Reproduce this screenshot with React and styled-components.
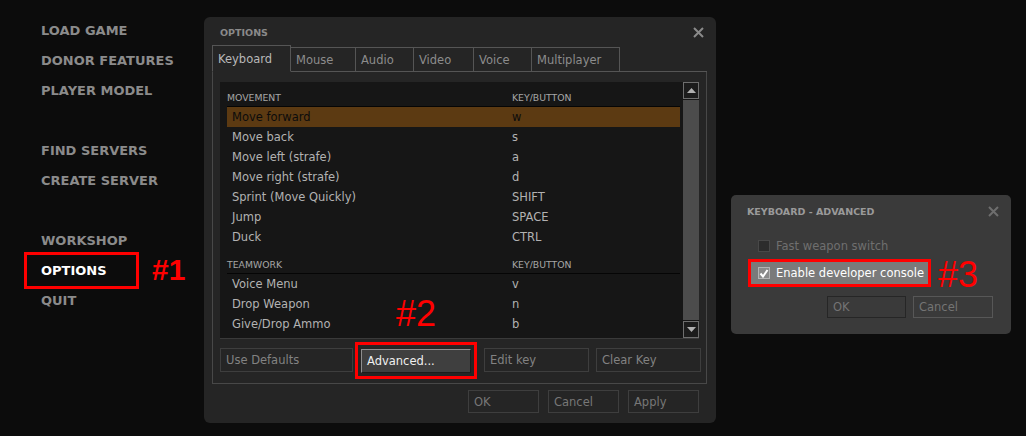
import React from 'react';
import styled, { createGlobalStyle } from 'styled-components';

const GlobalStyle = createGlobalStyle`
  html, body {
    margin: 0;
    padding: 0;
    background: #0c0c0c;
  }
  body {
    font-family: "DejaVu Sans", Verdana, sans-serif;
  }
`

const Page = styled.div`
  width: 1026px;
  height: 436px;
  display: flex;
  align-items: flex-start;
  overflow: hidden;
  background: #0c0c0c;
`

const Menu = styled.div`
  width: 204px;
  box-sizing: border-box;
  padding: 16px 0 0 41px;
  display: flex;
  flex-direction: column;
`

const MenuItem = styled.div`
  position: relative;
  height: 30px;
  line-height: 30px;
  font-weight: bold;
  font-size: 13px;
  white-space: nowrap;
  color: ${p => (p.$active ? '#ffffff' : '#8b8b8b')};
`

const MenuGap = styled.div`
  height: 30px;
`

const MenuMarker = styled.span`
  position: absolute;
  left: -17px;
  top: -4px;
  width: 115px;
  height: 37px;
  box-sizing: border-box;
  border: 3px solid #ff0000;
`

const Tag = styled.span`
  position: absolute;
  left: ${p => p.$left}px;
  top: ${p => p.$top}px;
  font-family: "Liberation Sans", Arial, sans-serif;
  font-size: ${p => p.$size}px;
  line-height: ${p => p.$size}px;
  color: #ff0000;
  white-space: nowrap;
`

const Dialog = styled.div`
  width: 512px;
  height: 406px;
  margin-top: 17px;
  box-sizing: border-box;
  padding: 0 9px 0 8px;
  background: #252525;
  border-radius: 6px;
  display: flex;
  flex-direction: column;
`

const TitleBar = styled.div`
  height: 28px;
  box-sizing: border-box;
  padding: 2px 3px 0 8px;
  display: flex;
  align-items: center;
  justify-content: space-between;
`

const Title = styled.span`
  font-weight: bold;
  font-size: 9.5px;
  color: #8a8a8a;
`

const TabRow = styled.div`
  height: 26px;
  display: flex;
  align-items: flex-end;
  border-bottom: 1px solid #555555;
`

const Tab = styled.div`
  width: ${p => p.$w}px;
  height: ${p => (p.$active ? 27 : 25)}px;
  margin-bottom: -1px;
  box-sizing: border-box;
  padding: 1px 0 0 5px;
  display: flex;
  align-items: center;
  border: 1px solid #555555;
  border-bottom-color: ${p => (p.$active ? '#252525' : '#555555')};
  border-left-width: ${p => (p.$first ? 1 : 0)}px;
  font-size: 11.5px;
  color: ${p => (p.$active ? '#b8b8b8' : '#8c8c8c')};
`

const Panel = styled.div`
  height: 312px;
  box-sizing: border-box;
  padding: 10px 7px 0 7px;
  border: 1px solid #484848;
  border-top: none;
  display: flex;
  flex-direction: column;
`

const List = styled.div`
  height: 257px;
  display: flex;
  background: #161616;
  border-bottom: 1px solid #3a3a3a;
  box-sizing: border-box;
`

const ListBody = styled.div`
  flex: 1;
  padding: 0 3px 0 7px;
`

const SectionHeader = styled.div`
  height: ${p => p.$h}px;
  box-sizing: border-box;
  display: grid;
  grid-template-columns: 285px 1fr;
  align-items: end;
  padding-bottom: 2px;
  line-height: 12px;
  border-bottom: 1px solid #050505;
  font-size: 9.3px;
  color: #a6a6a6;
`

const Row = styled.div`
  height: 20px;
  display: grid;
  grid-template-columns: 280px 1fr;
  align-items: center;
  padding-left: 5px;
  font-size: 11.5px;
  background: ${p => (p.$selected ? '#5c3a12' : 'transparent')};
  color: ${p => (p.$selected ? '#0c0c0c' : '#b2b2b2')};
`

const Scrollbar = styled.div`
  width: 16px;
  display: flex;
  flex-direction: column;
  background: #161616;
`

const ScrollButton = styled.div`
  height: 17px;
  box-sizing: border-box;
  border: 1px solid #6e6e6e;
  background: #1c1c1c;
  display: flex;
  align-items: center;
  justify-content: center;
`

const Thumb = styled.div`
  flex: 1;
  margin: 1px 0;
  background: #4c4c4c;
`

const ButtonRow = styled.div`
  height: 24px;
  margin: 9px -2px 0 0;
  display: flex;
  align-items: center;
`

const Button = styled.div`
  width: ${p => p.$w}px;
  height: ${p => p.$h || 24}px;
  margin-left: ${p => p.$ml || 0}px;
  box-sizing: border-box;
  padding-left: 5px;
  display: flex;
  align-items: center;
  font-size: 11.5px;
  white-space: nowrap;
  border: 1px solid ${p => p.$border || '#3e3e3e'};
  color: ${p => p.$color || '#828282'};
`

const RaisedButton = styled(Button)`
  background: #3f3f3f;
  border-color: #8e8e8e #1c1c1c #1c1c1c #8e8e8e;
  color: #f0f0f0;
`

const Highlight = styled.div`
  position: relative;
  margin-left: ${p => p.$ml || 0}px;
  padding: 4px 3px 3px 3px;
  border: 3px solid #ff0000;
  flex-shrink: 0;
`

const Footer = styled.div`
  height: 23px;
  margin-top: 6px;
  padding-right: 8px;
  display: flex;
  justify-content: flex-end;
  gap: 9px;
`

const Advanced = styled.div`
  width: 280px;
  height: 139px;
  margin: 195px 0 0 15px;
  box-sizing: border-box;
  background: #3a3a3a;
  border-radius: 5px;
  display: flex;
  flex-direction: column;
`

const AdvTitleBar = styled.div`
  height: 32px;
  padding: 0 12px 0 16px;
  display: flex;
  align-items: center;
  justify-content: space-between;
`

const AdvTitle = styled.span`
  font-weight: bold;
  font-size: 9.5px;
  color: #9a9a9a;
`

const CheckList = styled.div`
  padding: 9px 0 0 17px;
  display: flex;
  flex-direction: column;
  gap: 3px;
`

const CheckRow = styled.div`
  height: 20px;
  padding-left: 10px;
  display: flex;
  align-items: center;
  gap: 6px;
  font-size: 11.5px;
  color: #6f6f6f;
`

const CheckHighlight = styled.div`
  position: relative;
  width: 183px;
  height: 28px;
  box-sizing: border-box;
  border: 3px solid #ff0000;
  background: #7a7a7a;
  padding-left: 7px;
  display: flex;
  align-items: center;
  gap: 6px;
  font-size: 11.5px;
  color: #ffffff;
`

const Box = styled.span`
  width: 12px;
  height: 12px;
  box-sizing: border-box;
  flex-shrink: 0;
  display: flex;
  align-items: center;
  justify-content: center;
  border: 1px solid ${p => (p.$checked ? '#b4b4b4' : '#484848')};
  background: ${p => (p.$checked ? '#8a8a8a' : '#2c2c2c')};
`

const AdvButtons = styled.div`
  margin-top: 9px;
  padding-right: 18px;
  display: flex;
  justify-content: flex-end;
  gap: 7px;
`

const Close = ({ color }) => (
  <svg width="11" height="11" viewBox="0 0 11 11">
    <path d="M1 1 L10 10 M10 1 L1 10" stroke={color} strokeWidth="2" />
  </svg>
)

const Arrow = ({ down }) => (
  <svg width="9" height="5" viewBox="0 0 9 5">
    <polygon points={down ? '0,0 9,0 4.5,5' : '0,5 9,5 4.5,0'} fill="#b0b0b0" />
  </svg>
)

const movement = [
  ['Move forward', 'w'],
  ['Move back', 's'],
  ['Move left (strafe)', 'a'],
  ['Move right (strafe)', 'd'],
  ['Sprint (Move Quickly)', 'SHIFT'],
  ['Jump', 'SPACE'],
  ['Duck', 'CTRL'],
]

const teamwork = [
  ['Voice Menu', 'v'],
  ['Drop Weapon', 'n'],
  ['Give/Drop Ammo', 'b'],
]

const tabs = [
  ['Keyboard', 79],
  ['Mouse', 65],
  ['Audio', 58],
  ['Video', 60],
  ['Voice', 58],
  ['Multiplayer', 88],
]

const App = () => {
  return (
    <Page>
      <GlobalStyle />
      <Menu>
        <MenuItem>LOAD GAME</MenuItem>
        <MenuItem>DONOR FEATURES</MenuItem>
        <MenuItem>PLAYER MODEL</MenuItem>
        <MenuGap />
        <MenuItem>FIND SERVERS</MenuItem>
        <MenuItem>CREATE SERVER</MenuItem>
        <MenuGap />
        <MenuItem>WORKSHOP</MenuItem>
        <MenuItem $active>
          <MenuMarker />
          OPTIONS
          <Tag $left={111} $top={-1} $size={30}>#1</Tag>
        </MenuItem>
        <MenuItem>QUIT</MenuItem>
      </Menu>

      <Dialog>
        <TitleBar>
          <Title>OPTIONS</Title>
          <Close color="#8a8a8a" />
        </TitleBar>
        <TabRow>
          {tabs.map(([name, w], i) => (
            <Tab key={name} $w={w} $active={i === 0} $first={i === 0}>{name}</Tab>
          ))}
        </TabRow>
        <Panel>
          <List>
            <ListBody>
              <SectionHeader $h={25}>
                <span>MOVEMENT</span>
                <span>KEY/BUTTON</span>
              </SectionHeader>
              {movement.map(([name, key], i) => (
                <Row key={name} $selected={i === 0}>
                  <span>{name}</span>
                  <span>{key}</span>
                </Row>
              ))}
              <SectionHeader $h={27}>
                <span>TEAMWORK</span>
                <span>KEY/BUTTON</span>
              </SectionHeader>
              {teamwork.map(([name, key]) => (
                <Row key={name}>
                  <span>{name}</span>
                  <span>{key}</span>
                </Row>
              ))}
            </ListBody>
            <Scrollbar>
              <ScrollButton><Arrow /></ScrollButton>
              <Thumb />
              <ScrollButton><Arrow down /></ScrollButton>
            </Scrollbar>
          </List>
          <ButtonRow>
            <Button $w={133}>Use Defaults</Button>
            <Highlight $ml={2}>
              <RaisedButton $w={110}>Advanced...</RaisedButton>
              <Tag $left={38} $top={-49} $size={36}>#2</Tag>
            </Highlight>
            <Button $w={105} $ml={7}>Edit key</Button>
            <Button $w={105} $ml={7}>Clear Key</Button>
          </ButtonRow>
        </Panel>
        <Footer>
          <Button $w={71} $h={23} $color="#777777">OK</Button>
          <Button $w={71} $h={23} $color="#777777">Cancel</Button>
          <Button $w={71} $h={23} $color="#777777">Apply</Button>
        </Footer>
      </Dialog>

      <Advanced>
        <AdvTitleBar>
          <AdvTitle>KEYBOARD - ADVANCED</AdvTitle>
          <Close color="#6e6e6e" />
        </AdvTitleBar>
        <CheckList>
          <CheckRow>
            <Box />
            Fast weapon switch
          </CheckRow>
          <CheckHighlight>
            <Box $checked>
              <svg width="10" height="9" viewBox="0 0 10 9">
                <polyline points="1.5,4.5 4,7.5 8.5,1" fill="none" stroke="#ffffff" strokeWidth="2" />
              </svg>
            </Box>
            Enable developer console
            <Tag $left={187} $top={-5} $size={36}>#3</Tag>
          </CheckHighlight>
        </CheckList>
        <AdvButtons>
          <Button $w={79} $h={22} $border="#262626" $color="#747474">OK</Button>
          <Button $w={80} $h={22} $border="#575757" $color="#747474">Cancel</Button>
        </AdvButtons>
      </Advanced>
    </Page>
  )
}

export default App;
